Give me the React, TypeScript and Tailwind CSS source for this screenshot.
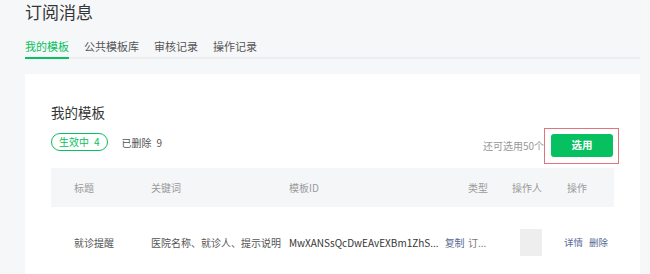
const font = { fontFamily: '"Noto Sans CJK SC", "Noto Sans", sans-serif' };

const headers = [
    { label: '标题', w: 'w-[77px]' },
    { label: '关键词', w: 'w-[138px]' },
    { label: '模板ID', w: 'w-[179px]' },
    { label: '类型', w: 'w-[44px]' },
    { label: '操作人', w: 'w-[55px]' },
    { label: '操作', w: 'w-[40px]' },
];

const tabs = ['我的模板', '公共模板库', '审核记录', '操作记录'];

export default function App() {
    return (
        <div className="w-[650px] h-[274px] overflow-hidden bg-[#f6f7f9] pl-[25px] pr-[10px]" style={font}>
            <div className="pt-[2px] h-[22px] text-[17px] leading-[20px] text-[#353535]">订阅消息</div>

            {/* tabs */}
            <div className="mt-[16px] flex gap-[15px] border-b-[2px] border-[#ebedf0]">
                {tabs.map((t, i) => (
                    <div
                        key={t}
                        className={`text-[11px] leading-[16px] pb-[3px] ${i === 0 ? 'text-[#07c160] border-b-[2px] border-[#07c160] -mb-[2px]' : 'text-[#555]'}`}
                    >
                        {t}
                    </div>
                ))}
            </div>

            {/* card */}
            <div className="mt-[15px] bg-white px-[26px] pt-[29px] h-[300px]">
                <div className="text-[13.5px] leading-[18px] text-[#353535]">我的模板</div>

                <div className="mt-[7px] flex items-center h-[35px]">
                    <div className="mb-[7px] flex items-center">
                        <div className="h-[18px] px-[7px] rounded-full border border-[#07c160] text-[#07c160] text-[10px] leading-[16px] flex items-center gap-[5px] whitespace-nowrap">
                            <span>生效中</span>
                            <span>4</span>
                        </div>
                        <div className="ml-[14px] text-[10px] text-[#555] flex gap-[5px] whitespace-nowrap">
                            <span>已删除</span>
                            <span>9</span>
                        </div>
                    </div>
                    <div className="ml-auto text-[10px] text-[#999] whitespace-nowrap">还可选用50个</div>
                    <div className="mr-[-5px] pl-[6px] pr-[5px] pt-[5px] pb-[6px] border border-[#e0757b]">
                        <div className="w-[62px] h-[23px] rounded-[3px] bg-[#07c160] text-white text-[10.5px] font-bold flex items-center justify-center">
                            选用
                        </div>
                    </div>
                </div>

                {/* table */}
                <div className="mt-[5px]">
                    <div className="h-[39px] bg-[#f5f6f8] pl-[23px] flex items-center text-[10px] text-[#9a9a9a] whitespace-nowrap">
                        {headers.map((h) => (
                            <div key={h.label} className={h.w}>{h.label}</div>
                        ))}
                    </div>
                    <div className="h-[70px] pl-[23px] flex items-center text-[10px] text-[#555] whitespace-nowrap">
                        <div className="w-[77px]">就诊提醒</div>
                        <div className="w-[138px]">医院名称、就诊人、提示说明</div>
                        <div className="w-[179px] flex items-center">
                            <span className="text-[#353535]">MwXANSsQcDwEAvEXBm1ZhS...</span>
                            <span className="ml-[6px] text-[#576b95]">复制</span>
                        </div>
                        <div className="w-[44px] text-[#777]">订...</div>
                        <div className="w-[52px] pl-[8px]">
                            <div className="w-[22px] h-[27px] bg-[#eeeeee]" />
                        </div>
                        <div className="flex gap-[6px] text-[#576b95] text-[9.5px]">
                            <span>详情</span>
                            <span>删除</span>
                        </div>
                    </div>
                </div>
            </div>
        </div>
    );
}
